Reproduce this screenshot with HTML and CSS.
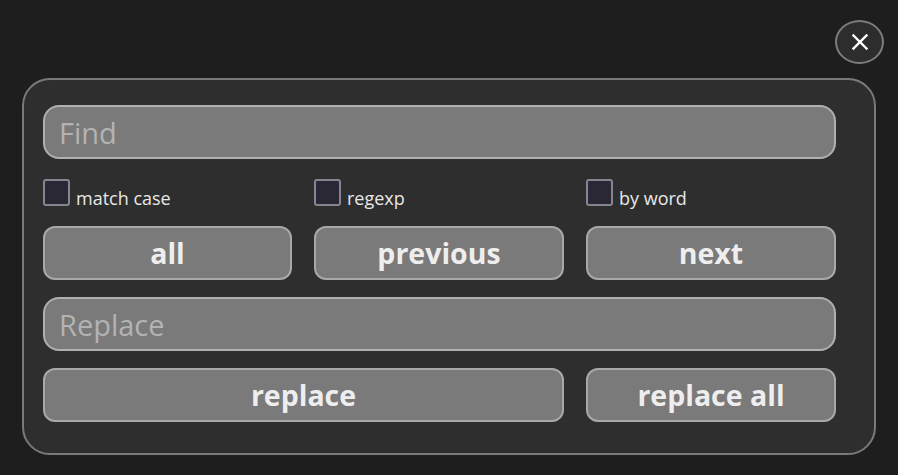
FILE: index.html
```html
<!DOCTYPE html>
<html>
<head>
<meta charset="utf-8">
<link rel="stylesheet" href="styles.css">
</head>
<body>
<div class="page">
  <div class="topbar">
    <button class="close" aria-label="close">
      <svg width="18" height="18" viewBox="0 0 18 18"><path d="M2.5 2.5 L15.5 15.5 M15.5 2.5 L2.5 15.5" stroke="#ffffff" stroke-width="2.4" stroke-linecap="square"/></svg>
    </button>
  </div>
  <div class="panel">
    <input class="field" type="text" placeholder="Find">
    <div class="opts">
      <label class="opt"><span class="box"></span><span class="lbl">match case</span></label>
      <label class="opt"><span class="box"></span><span class="lbl">regexp</span></label>
      <label class="opt"><span class="box"></span><span class="lbl">by word</span></label>
    </div>
    <div class="row3">
      <button class="btn">all</button>
      <button class="btn">previous</button>
      <button class="btn">next</button>
    </div>
    <input class="field field-r" type="text" placeholder="Replace">
    <div class="row2">
      <button class="btn">replace</button>
      <button class="btn">replace all</button>
    </div>
  </div>
</div>
</body>
</html>
```
FILE: styles.css
```css
html, body {
  margin: 0;
  padding: 0;
  background: #1e1e1e;
  font-family: "Open Sans", "Noto Sans", sans-serif;
}
.page {
  width: 898px;
  height: 475px;
  padding: 20px 0 0 22px;
  box-sizing: border-box;
}
.topbar {
  display: flex;
  justify-content: flex-end;
  width: 862px;
  height: 44px;
}
.close {
  width: 49px;
  height: 44px;
  border-radius: 50%;
  border: 2px solid #7c7c7c;
  background: #2d2d2d;
  display: flex;
  align-items: center;
  justify-content: center;
  padding: 0;
}
.panel {
  margin-top: 14px;
  width: 854px;
  height: 377px;
  box-sizing: border-box;
  border: 2px solid #7a7a7a;
  border-radius: 28px;
  background: #2e2e2e;
  padding: 25px 38px 0 19px;
  display: flex;
  flex-direction: column;
}
.field {
  display: block;
  width: 793px;
  height: 54px;
  box-sizing: border-box;
  border: 2px solid #b0b0b0;
  border-radius: 16px;
  background: #7a7a7a;
  font-family: "Open Sans", "Noto Sans", sans-serif;
  font-size: 29px;
  padding: 0 14px;
  color: #eeeeee;
  outline: none;
}
.field::placeholder {
  color: #b3b3b3;
}
.opts {
  margin-top: 20px;
  display: grid;
  grid-template-columns: 249px 250px 249px;
  column-gap: 22px;
  height: 28px;
}
.opt {
  display: flex;
  align-items: flex-start;
  gap: 6px;
}
.box {
  width: 27px;
  height: 27px;
  box-sizing: border-box;
  border: 2px solid #87858f;
  border-radius: 3px;
  background: #2a2835;
  flex: none;
}
.lbl {
  color: #e8e8e8;
  font-size: 18px;
  line-height: 18px;
  margin-top: 10px;
}
.row3 {
  margin-top: 19px;
  display: grid;
  grid-template-columns: 249px 250px 250px;
  column-gap: 22px;
}
.row2 {
  margin-top: 17px;
  display: grid;
  grid-template-columns: 521px 250px;
  column-gap: 22px;
}
.field-r {
  margin-top: 17px;
}
.btn {
  height: 54px;
  box-sizing: border-box;
  border: 2px solid #a8a8a8;
  border-radius: 12px;
  background: #7a7a7a;
  color: #eeeeee;
  font-family: "Open Sans", "Noto Sans", sans-serif;
  font-weight: 700;
  font-size: 28.5px;
  padding: 0;
}
```
